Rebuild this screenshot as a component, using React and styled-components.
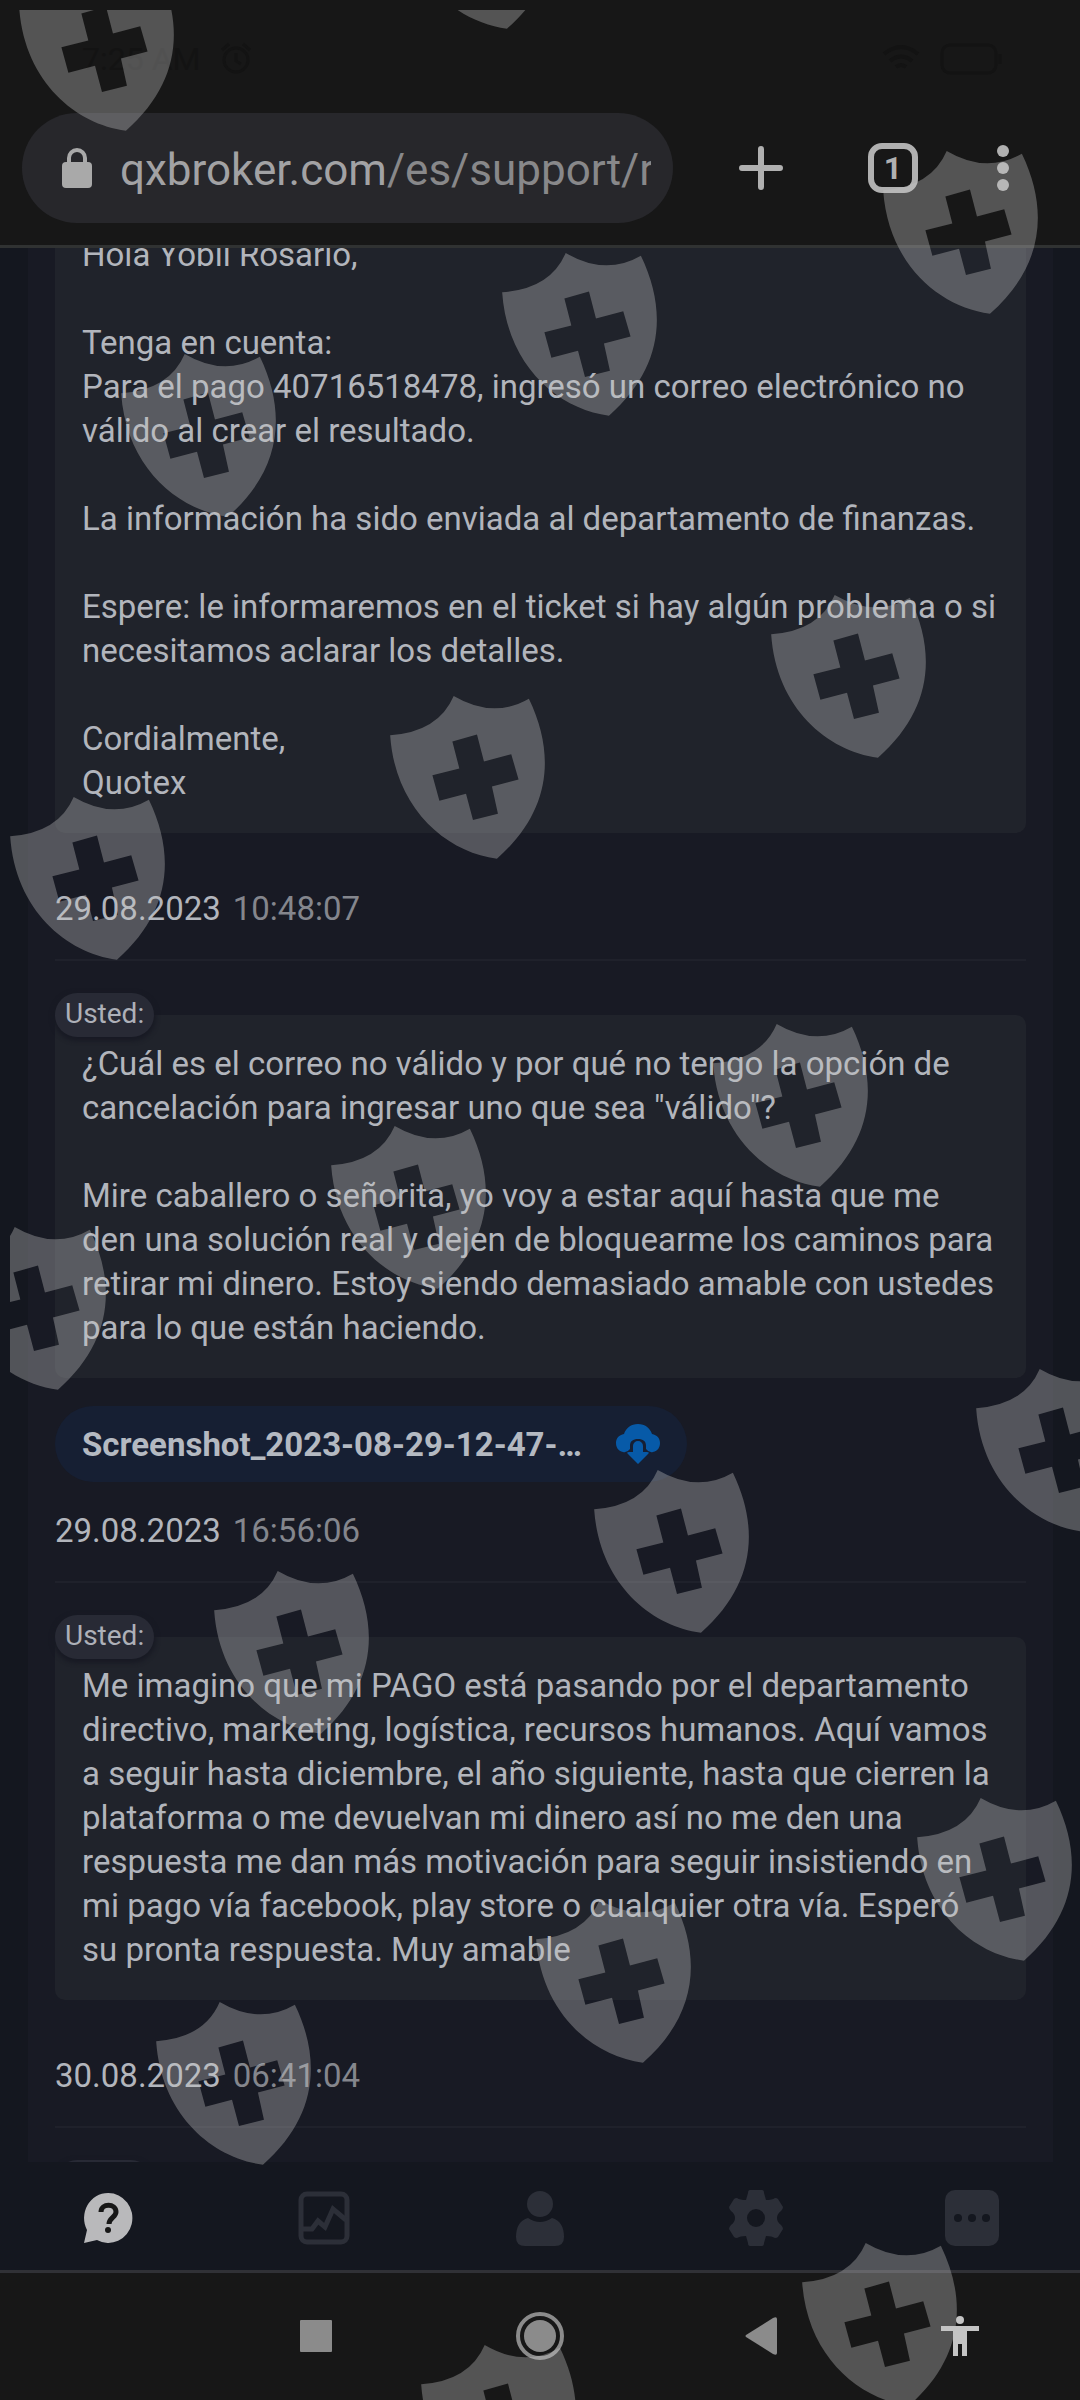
import React from 'react';
import styled, { createGlobalStyle } from 'styled-components';

const GlobalStyle = createGlobalStyle`
    * {
        box-sizing: border-box;
    }

    body {
        margin: 0;
        background-color: #171717;
        font-family: Roboto, "Liberation Sans", sans-serif;
    }

    button {
        padding: 0;
        border: none;
        background: none;
        font-family: inherit;
        cursor: pointer;
    }

    svg {
        display: block;
    }
`;

const Screen = styled.div`
    position: relative;
    display: flex;
    flex-direction: column;
    height: 100vh;
    overflow: hidden;
`;

const StatusBar = styled.div`
    display: flex;
    align-items: center;
    justify-content: space-between;
    height: 113px;
    padding: 4px 76px 0 82px;
    color: #131313;
    font-size: 32px;
`;

const StatusGroup = styled.div`
    display: flex;
    align-items: center;
    gap: 20px;
`;

const Toolbar = styled.header`
    display: flex;
    align-items: center;
    height: 135px;
    padding: 0 40px 22px 22px;
    border-bottom: 3px solid #303232;
`;

const AddressBar = styled.div`
    display: flex;
    flex: 1;
    align-items: center;
    gap: 28px;
    min-width: 0;
    height: 110px;
    padding: 0 22px 0 40px;
    border-radius: 55px;
    background-color: #27272b;
`;

const AddressText = styled.a`
    flex: 1;
    padding-top: 4px;
    overflow: hidden;
    color: #a2a2a4;
    font-size: 44px;
    line-height: 60px;
    text-decoration: none;
    white-space: nowrap;
`;

const AddressPath = styled.span`
    color: #88888a;
`;

const ToolbarButtons = styled.div`
    display: flex;
    align-items: center;
    margin-left: 29px;
`;

const ToolbarButton = styled.button`
    display: flex;
    justify-content: center;
    width: ${ props => props.$width }px;
    color: #b0b0b0;
`;

const TabCount = styled.span`
    width: 50px;
    height: 50px;
    border: 6px solid #b0b0b0;
    border-radius: 14px;
    font-size: 32px;
    font-weight: 700;
    line-height: 38px;
    text-align: center;
`;

const Page = styled.main`
    flex: 1;
    min-height: 0;
    padding: 0 27px 0 28px;
    overflow: hidden;
    background-color: #14171f;
`;

const Panel = styled.section`
    height: 100%;
    padding: 0 27px;
    overflow: hidden;
    background-color: #181a24;
`;

const Thread = styled.div`
    margin-top: -74px;
`;

const MessageBlock = styled.article`
    padding: 32px 0 28px;
    border-bottom: 2px solid #1f212b;
`;

const Author = styled.div`
    position: relative;
    z-index: 1;
    width: fit-content;
    min-width: 98px;
    height: 44px;
    margin-bottom: -22px;
    padding: 0 10px;
    border-radius: 22px;
    background-color: #282a35;
    box-shadow: 0 2px 4px 2px #181a24;
    color: #adb0b8;
    font-size: 28px;
    line-height: 42px;
`;

const Bubble = styled.div`
    padding: 27px 27px 28px;
    border-radius: 10px;
    background-color: #20232b;
    color: #b2b5bc;
    font-size: 33px;
    line-height: 44px;
    white-space: pre-line;
`;

const Attachment = styled.button`
    display: flex;
    align-items: center;
    gap: 34px;
    height: 76px;
    margin-top: 28px;
    padding: 0 27px;
    border-radius: 38px;
    background-color: #161f33;
    color: #b4b9c1;
    font-size: 33px;
    font-weight: 700;
`;

const DateRow = styled.div`
    display: flex;
    gap: 12px;
    margin-top: ${ props => props.$tight ? 27 : 54 }px;
    color: #b2b5bc;
    font-size: 33px;
    line-height: 44px;
`;

const Time = styled.time`
    color: #84868d;
`;

const TabBar = styled.nav`
    display: flex;
    align-items: center;
    justify-content: space-around;
    height: 111px;
    padding-top: 3px;
    border-bottom: 3px solid #303136;
    background-color: #14171f;
`;

const Tab = styled.button`
    display: flex;
    justify-content: center;
    flex: 1;
    color: ${ props => props.$active ? '#b9b9bb' : '#2c2f38' };
`;

const SystemBar = styled.footer`
    display: grid;
    grid-template-columns: 224fr 224fr 218fr 180fr;
    align-items: center;
    height: 127px;
    padding: 0 30px 2px 204px;
`;

const SystemButton = styled.button`
    display: flex;
    justify-content: center;
    color: ${ props => props.$bright ? '#c4c4c4' : '#8b8b8b' };
`;

const Watermark = styled.div`
    position: absolute;
    inset: 10px 0 0 10px;
    overflow: hidden;
    pointer-events: none;
`;

const ShieldMark = styled.svg`
    position: absolute;
    left: ${ props => props.$x - 10 }px;
    top: ${ props => props.$y - 10 }px;
    width: 156px;
    height: 163px;
    fill: rgba(197, 197, 197, 0.35);
`;

const shields = [
    [400, -134], [19, -32],
    [883, 151], [502, 253], [121, 354],
    [771, 595], [390, 696], [10, 797],
    [713, 1024], [331, 1126], [-49, 1227],
    [976, 1369], [594, 1470], [214, 1571],
    [917, 1798], [536, 1900], [156, 2002],
    [802, 2243], [421, 2345],
];

const messages = [
    {
        date: '29.08.2023',
        time: '10:48:07',
        text: `Hola Yobil Rosario,

Tenga en cuenta:
Para el pago 40716518478, ingresó un correo electrónico no
válido al crear el resultado.

La información ha sido enviada al departamento de finanzas.

Espere: le informaremos en el ticket si hay algún problema o si
necesitamos aclarar los detalles.

Cordialmente,
Quotex`,
    },
    {
        author: 'Usted:',
        date: '29.08.2023',
        time: '16:56:06',
        file: 'Screenshot_2023-08-29-12-47-…',
        text: `¿Cuál es el correo no válido y por qué no tengo la opción de
cancelación para ingresar uno que sea "válido"?

Mire caballero o señorita, yo voy a estar aquí hasta que me
den una solución real y dejen de bloquearme los caminos para
retirar mi dinero. Estoy siendo demasiado amable con ustedes
para lo que están haciendo.`,
    },
    {
        author: 'Usted:',
        date: '30.08.2023',
        time: '06:41:04',
        text: `Me imagino que mi PAGO está pasando por el departamento
directivo, marketing, logística, recursos humanos. Aquí vamos
a seguir hasta diciembre, el año siguiente, hasta que cierren la
plataforma o me devuelvan mi dinero así no me den una
respuesta me dan más motivación para seguir insistiendo en
mi pago vía facebook, play store o cualquier otra vía. Esperó
su pronta respuesta. Muy amable`,
    },
];

const AlarmIcon = () => (
    <svg width="32" height="34" viewBox="0 0 32 34" fill="none" stroke="currentColor" strokeWidth="3">
        <circle cx="16" cy="18" r="12" />
        <path d="M16 11v8l5 3M2 8l7-6M30 8l-7-6" />
    </svg>
);

const WifiIcon = () => (
    <svg width="38" height="30" viewBox="0 0 38 30" fill="none" stroke="currentColor" strokeWidth="4">
        <path d="M2 10q17-14 34 0M8 17q11-9 22 0M14 23q5-4 10 0" />
    </svg>
);

const BatteryIcon = () => (
    <svg width="64" height="32" viewBox="0 0 64 32" fill="none" stroke="currentColor" strokeWidth="3">
        <rect x="2" y="2" width="54" height="28" rx="8" />
        <path d="M60 11v10" />
    </svg>
);

const LockIcon = () => (
    <svg width="30" height="40" viewBox="0 0 30 40">
        <path d="M7 16V10a8 8 0 0 1 16 0v6" fill="none" stroke="#a9a9a9" strokeWidth="4" />
        <rect y="14" width="30" height="26" rx="4" fill="#a9a9a9" />
    </svg>
);

const DownloadIcon = () => (
    <svg width="44" height="40" viewBox="0 0 44 40" fill="#075aa8">
        <path d="M7 28C2 27 0 23 0 19c0-5 3-8 8-9C10 4 15 0 22 0s12 4 14 10c5 1 8 4 8 9 0 4-2 8-7 9q-4 1-7-3v-3c0-5-3-7-8-7s-8 2-8 7v3q-3 4-7 3z" />
        <path d="M17 22a5 5 0 0 1 10 0v6h4q3 0 1 2L22 40 12 30q-2-2 1-2h4z" />
    </svg>
);

const HelpIcon = () => (
    <svg width="50" height="52" viewBox="0 0 50 52">
        <path d="M25 1a24 25 0 1 1-11 47L1 51l3-13A24 25 0 0 1 25 1z" fill="currentColor" />
        <path d="M18 20c0-9 15-9 15 0 0 5-7 6-7 12" fill="none" stroke="#171717" strokeWidth="5" />
        <circle cx="25" cy="38" r="3" fill="#171717" />
    </svg>
);

const ChartIcon = () => (
    <svg width="52" height="54" viewBox="0 0 52 54" fill="none" stroke="currentColor" strokeWidth="5">
        <rect x="3" y="3" width="46" height="48" rx="6" />
        <path d="M4 38h10l6-8 7 6 8-18 13 11" />
    </svg>
);

const PersonIcon = () => (
    <svg width="48" height="56" viewBox="0 0 48 56" fill="currentColor">
        <circle cx="24" cy="14" r="13" />
        <path d="M12 28q12 8 24 0c8 2 12 9 12 19q0 9-9 9H9q-9 0-9-9c0-10 4-17 12-19z" />
    </svg>
);

const GearIcon = () => (
    <svg width="54" height="56" viewBox="0 0 54 56">
        <path
            d="M21 0h12q2 0 2 3l2 7q6 0 9-2 2 0 3 1l5 8q0 2-2 4-4 3-4 7t4 7q2 2 2 4l-5 8q-1 1-3 1-3-2-9-2l-2 7q0 3-2 3H21q-2 0-2-3l-2-7q-6 0-9 2-2 0-3-1l-5-8q0-2 2-4 4-3 4-7t-4-7q-2-2-2-4l5-8q1-1 3-1 3 2 9 2l2-7q0-3 2-3zM27 19a9 9 0 1 0 0 18 9 9 0 0 0 0-18z"
            fill="currentColor"
            fillRule="evenodd"
        />
    </svg>
);

const MoreIcon = () => (
    <svg width="54" height="56" viewBox="0 0 54 56">
        <rect width="54" height="56" rx="10" fill="currentColor" />
        <g fill="#14171f">
            <circle cx="13" cy="28" r="4" />
            <circle cx="27" cy="28" r="4" />
            <circle cx="41" cy="28" r="4" />
        </g>
    </svg>
);

const Message = ({ item }) => {
    return (
        <MessageBlock>
            { item.author && <Author>{ item.author }</Author> }
            <Bubble>{ item.text }</Bubble>
            {
                item.file &&
                <Attachment type="button">
                    { item.file }
                    <DownloadIcon />
                </Attachment>
            }
            <DateRow $tight={ !!item.file }>
                <span>{ item.date }</span>
                <Time>{ item.time }</Time>
            </DateRow>
        </MessageBlock>
    );
};

const App = () => {
    return (
        <Screen>
            <GlobalStyle />
            <StatusBar>
                <StatusGroup>
                    <span>7:25 AM</span>
                    <AlarmIcon />
                </StatusGroup>
                <StatusGroup>
                    <WifiIcon />
                    <BatteryIcon />
                </StatusGroup>
            </StatusBar>
            <Toolbar>
                <AddressBar>
                    <LockIcon />
                    <AddressText href="#">
                        qxbroker.com<AddressPath>/es/support/r</AddressPath>
                    </AddressText>
                </AddressBar>
                <ToolbarButtons>
                    <ToolbarButton $width={ 118 } aria-label="Nueva pestaña">
                        <svg width="44" height="44" viewBox="0 0 44 44" stroke="currentColor" strokeWidth="6" strokeLinecap="round">
                            <path d="M22 3v38M3 22h38" />
                        </svg>
                    </ToolbarButton>
                    <ToolbarButton $width={ 146 } aria-label="Pestañas">
                        <TabCount>1</TabCount>
                    </ToolbarButton>
                    <ToolbarButton $width={ 74 } aria-label="Menú">
                        <svg width="12" height="46" viewBox="0 0 12 46" fill="currentColor">
                            <circle cx="6" cy="6" r="6" />
                            <circle cx="6" cy="23" r="6" />
                            <circle cx="6" cy="40" r="6" />
                        </svg>
                    </ToolbarButton>
                </ToolbarButtons>
            </Toolbar>
            <Page>
                <Panel>
                    <Thread>
                        { messages.map(item => <Message key={ item.time } item={ item } />) }
                        <MessageBlock>
                            <Author />
                        </MessageBlock>
                    </Thread>
                </Panel>
            </Page>
            <TabBar>
                <Tab $active aria-label="Soporte"><HelpIcon /></Tab>
                <Tab aria-label="Gráfico"><ChartIcon /></Tab>
                <Tab aria-label="Cuenta"><PersonIcon /></Tab>
                <Tab aria-label="Ajustes"><GearIcon /></Tab>
                <Tab aria-label="Más"><MoreIcon /></Tab>
            </TabBar>
            <SystemBar>
                <SystemButton aria-label="Recientes">
                    <svg width="32" height="32" viewBox="0 0 32 32" fill="currentColor">
                        <rect width="32" height="32" rx="1" />
                    </svg>
                </SystemButton>
                <SystemButton aria-label="Inicio">
                    <svg width="50" height="50" viewBox="0 0 50 50">
                        <circle cx="25" cy="25" r="22" fill="none" stroke="currentColor" strokeWidth="4" />
                        <circle cx="25" cy="25" r="16" fill="currentColor" />
                    </svg>
                </SystemButton>
                <SystemButton aria-label="Atrás">
                    <svg width="32" height="38" viewBox="0 0 32 38" fill="currentColor">
                        <path d="M1 18L28 1q4-2 4 1v34q0 3-4 1L1 20q-1-1 0-2z" />
                    </svg>
                </SystemButton>
                <SystemButton $bright aria-label="Accesibilidad">
                    <svg width="38" height="40" viewBox="0 0 38 40" fill="currentColor">
                        <circle cx="19" cy="4" r="4" />
                        <path d="M0 10h38v5H26v25h-5V28h-4v12h-5V15H0z" />
                    </svg>
                </SystemButton>
            </SystemBar>
            <Watermark>
                {
                    shields.map(([x, y]) => (
                        <ShieldMark key={ `${ x }-${ y }` } $x={ x } $y={ y } viewBox="0 0 468 490">
                            <path
                                d="M0 118Q145 108 191 0Q310 70 417 8C500 180 480 350 321 489C170 470 15 340 0 118ZM187 137L208 218L127 238L148 315L228 294L249 373L324 354L306 272L386 251L364 175L282 197L261 116Z"
                                fillRule="evenodd"
                            />
                        </ShieldMark>
                    ))
                }
            </Watermark>
        </Screen>
    );
};

export default App;
